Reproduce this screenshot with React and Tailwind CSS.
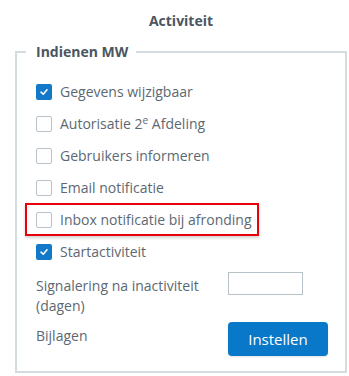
import React from 'react'

const rows = [
  { label: 'Gegevens wijzigbaar', checked: true },
  { label: <>Autorisatie 2<sup className="text-[10px]">e</sup> Afdeling</>, checked: false },
  { label: 'Gebruikers informeren', checked: false },
  { label: 'Email notificatie', checked: false },
  { label: 'Inbox notificatie bij afronding', checked: false, marked: true },
  { label: 'Startactiviteit', checked: true },
]

function Box({ checked }) {
  if (checked) {
    return (
      <span className="w-4 h-4 rounded-[2px] bg-[#1478c8] flex items-center justify-center shrink-0">
        <svg width="10" height="10" viewBox="0 0 10 10" fill="none">
          <polyline points="2,5.2 4.2,7.2 8,2.8" stroke="white" strokeWidth="1.6" strokeLinecap="round" strokeLinejoin="round" />
        </svg>
      </span>
    )
  }
  return <span className="w-4 h-4 rounded-[2px] border border-[#b9c2c8] bg-white shrink-0" />
}

export default function App() {
  return (
    <div className="w-[349px] h-[376px] bg-white text-[14px] text-[#5c6872] overflow-hidden" style={{ fontFamily: '"Open Sans", "Liberation Sans", sans-serif' }}>
      <div className="pt-[11px] pl-[15px] w-[347px] text-center font-bold text-[#4b5661] leading-[20px]">Activiteit</div>
      <fieldset className="mt-[11px] ml-[15px] w-[332px] border-2 border-[#d4dce0] pl-[19px] pr-[17px] pb-[15px]">
        <legend className="-ml-[10px] pl-[10px] pr-[8px] font-bold text-[#4b5661] leading-[20px]">Indienen MW</legend>
        <div className="pt-[14px]">
          {rows.map((r, i) => (
            <div key={i} className="relative h-8 flex items-center gap-[8px]">
              {r.marked && (
                <div className="absolute -left-[11px] -top-[1px] w-[234px] h-[33px] border-2 border-[#e8000b] shadow-[0_2px_3px_rgba(0,0,0,0.18)]" />
              )}
              <Box checked={r.checked} />
              <span className="leading-[20px] whitespace-nowrap">{r.label}</span>
            </div>
          ))}
        </div>
        <div className="grid grid-cols-[192px_1fr] mt-[4px]">
          <div className="pt-[4px] leading-[20px]">Signalering na inactiviteit (dagen)</div>
          <div>
            <div className="w-[75px] h-[23px] border border-[#b6c1c8] bg-white" />
          </div>
          <div className="pt-[4px] leading-[20px] mt-[6px]">Bijlagen</div>
          <div className="mt-[6px]">
            <button className="w-[100px] h-[34px] rounded-[4px] bg-[#0a78c8] text-white text-[15px] shadow-[0_1px_2px_rgba(0,0,0,0.12)]">Instellen</button>
          </div>
        </div>
      </fieldset>
    </div>
  )
}
